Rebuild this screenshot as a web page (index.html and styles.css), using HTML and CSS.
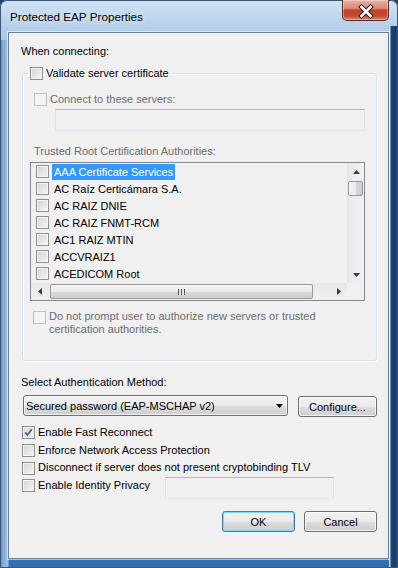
FILE: index.html
```html
<!DOCTYPE html>
<html lang="en">
<head>
  <meta charset="UTF-8" />
  <title>Protected EAP Properties</title>
  <link rel="stylesheet" href="styles.css">
</head>
<body>
  <div class="window">
    <div class="titlebar">
      <span class="title">Protected EAP Properties</span>
      <div class="close-btn">
        <svg width="47" height="21" viewBox="0 0 47 21">
          <path d="M19.5 8 L28.5 17 M28.5 8 L19.5 17" stroke="#3b1812" stroke-width="4.6" stroke-linecap="square" fill="none"/>
          <path d="M19.5 8 L28.5 17 M28.5 8 L19.5 17" stroke="#fff" stroke-width="2.6" stroke-linecap="square" fill="none"/>
        </svg>
      </div>
    </div>

    <div class="client">
      <div class="label">When connecting:</div>

      <fieldset class="group">
        <legend><div class="check"><span class="cb"></span>Validate server certificate</div></legend>

        <div class="check disabled"><span class="cb"></span>Connect to these servers:</div>
        <div class="textbox servers"></div>

        <div class="label disabled trusted">Trusted Root Certification Authorities:</div>
        <div class="listbox">
          <div class="list-items">
            <div class="item"><span class="cb"></span><span class="item-text selected">AAA Certificate Services</span></div>
            <div class="item"><span class="cb"></span><span class="item-text">AC Raíz Certicámara S.A.</span></div>
            <div class="item"><span class="cb"></span><span class="item-text">AC RAIZ DNIE</span></div>
            <div class="item"><span class="cb"></span><span class="item-text">AC RAIZ FNMT-RCM</span></div>
            <div class="item"><span class="cb"></span><span class="item-text">AC1 RAIZ MTIN</span></div>
            <div class="item"><span class="cb"></span><span class="item-text">ACCVRAIZ1</span></div>
            <div class="item"><span class="cb"></span><span class="item-text">ACEDICOM Root</span></div>
          </div>
          <div class="vscroll">
            <div class="sb-btn"><svg width="7" height="4" viewBox="0 0 7 4"><path d="M0 4 L3.5 0 L7 4 Z" fill="#3c3c3c"/></svg></div>
            <div class="vthumb"></div>
            <div class="sb-track"></div>
            <div class="sb-btn"><svg width="7" height="4" viewBox="0 0 7 4"><path d="M0 0 L3.5 4 L7 0 Z" fill="#3c3c3c"/></svg></div>
          </div>
          <div class="hscroll">
            <div class="sb-btn"><svg width="4" height="7" viewBox="0 0 4 7"><path d="M4 0 L0 3.5 L4 7 Z" fill="#3c3c3c"/></svg></div>
            <div class="hthumb"><span class="grip"></span></div>
            <div class="sb-track"></div>
            <div class="sb-btn"><svg width="4" height="7" viewBox="0 0 4 7"><path d="M0 0 L4 3.5 L0 7 Z" fill="#3c3c3c"/></svg></div>
          </div>
          <div class="corner"></div>
        </div>

        <div class="check disabled multiline"><span class="cb"></span><span>Do not prompt user to authorize new servers or trusted<br>certification authorities.</span></div>
      </fieldset>

      <div class="label method-label">Select Authentication Method:</div>
      <div class="method-row">
        <div class="combo">
          <span>Secured password (EAP-MSCHAP v2)</span>
          <svg width="7" height="4" viewBox="0 0 7 4"><path d="M0 0 L3.5 4 L7 0 Z" fill="#000"/></svg>
        </div>
        <div class="button configure">Configure...</div>
      </div>

      <div class="options">
        <div class="check"><span class="cb checked"><svg width="11" height="11" viewBox="0 0 11 11"><path d="M2.2 5.4 L4.4 8 L8.8 2.2" stroke="#4a5f8c" stroke-width="1.8" fill="none"/></svg></span>Enable Fast Reconnect</div>
        <div class="check"><span class="cb"></span>Enforce Network Access Protection</div>
        <div class="check"><span class="cb"></span>Disconnect if server does not present cryptobinding TLV</div>
        <div class="privacy-row">
          <div class="check privacy"><span class="cb"></span>Enable Identity Privacy</div>
          <div class="textbox identity"></div>
        </div>
      </div>

      <div class="dialog-buttons">
        <div class="button default">OK</div>
        <div class="button">Cancel</div>
      </div>
    </div>
  </div>
</body>
</html>
```

FILE: styles.css
```css
* { box-sizing: border-box; }
body {
  margin: 0;
  font-family: 'Liberation Sans', Arial, sans-serif;
  font-size: 11px;
  color: #000;
  background: #1d3f6e;
}
/* Aero glass frame */
.window {
  width: 398px;
  height: 568px;
  display: flex;
  flex-direction: column;
  padding: 0 9px 9px 8px;
  border-radius: 7px 7px 0 0;
  box-shadow: inset 0 0 0 1px #3b5775;
  background:
    linear-gradient(90deg, transparent 389px, #c7daee 389px, #c7daee 390px, #1f467a 391px, #163a68 396px, #3d6ea4 398px) 0 26px / 100% 542px no-repeat,
    linear-gradient(90deg, #33689f 0, #7aa6d6 2px, #9cc0e4 8px, transparent 9px) 0 40px / 100% 528px no-repeat,
    linear-gradient(180deg, #d2e3f4 0, #bcd4ec 20px, #a9c7e7 40px, #7ea8d6 200px, #4f86c3 520px, #2f6cb0 568px);
}
.titlebar {
  height: 32px;
  display: flex;
  align-items: flex-start;
}
.title {
  margin: 10px 0 0 2px;
  font-size: 11.7px;
  line-height: 14px;
  text-shadow: 0 0 6px rgba(255,255,255,0.9);
}
.close-btn {
  margin-left: auto;
  width: 47px;
  height: 21px;
  border: 1px solid #5b2a22;
  border-top: none;
  border-radius: 0 0 5px 5px;
  background: linear-gradient(180deg, #eab0a2 0%, #dc8875 42%, #c4412b 50%, #c14a33 78%, #d9886c 100%);
  box-shadow: inset 0 0 0 1px rgba(255,255,255,0.35);
}
.close-btn svg { display: block; margin: -1px 0 0 -1px; }

.client {
  flex: 1;
  display: flex;
  flex-direction: column;
  padding: 11px 11px 0 12px;
  background: #f0f0f0;
  border: 1px solid #6d7f93;
  box-shadow: 0 0 0 1px rgba(255,255,255,0.55);
}
.label { line-height: 15px; }
.disabled { color: #6d6d6d; }

/* checkboxes */
.check {
  display: flex;
  align-items: center;
  gap: 3px;
  line-height: 15px;
  white-space: nowrap;
}
.cb {
  flex: none;
  width: 13px;
  height: 13px;
  border: 1px solid #8e8f8f;
  background: linear-gradient(135deg, #d3d3d3, #f6f6f6);
  box-shadow: inset 0 0 0 1px #f4f4f4;
}
.cb.checked svg { display: block; }
.disabled .cb {
  border-color: #c3c3c3;
  background: #f4f4f4;
  box-shadow: none;
}

/* group box */
.group {
  margin: 7px 0 0 1px;
  padding: 11px 11px 24px 11px;
  border: 1px solid #d5dfe5;
  border-radius: 3px;
  box-shadow: 1px 1px 0 #fff, inset 1px 1px 0 #fff;
  display: flex;
  flex-direction: column;
}
.group legend {
  padding: 0 3px 0 2px;
  margin-left: -6px;
}
.textbox {
  height: 22px;
  border: 1px solid;
  border-color: #b5b9be #dde2e7 #e3e9ef #dde2e7;
  background: #f0f0f0;
}
.servers { margin: 2px 0 0 21px; }
.trusted { margin-top: 13px; }

/* certificate list */
.listbox {
  margin: 3px 0 0 -4px;
  height: 139px;
  border: 1px solid #828790;
  display: grid;
  grid-template-columns: 1fr 17px;
  grid-template-rows: 1fr 17px;
}
.list-items { overflow: hidden; }
.item {
  height: 17px;
  display: flex;
  align-items: center;
  padding-left: 5px;
  white-space: nowrap;
}
.item-text {
  margin-left: 3px;
  padding: 0 2px;
  line-height: 16px;
}
.item-text.selected { background: #3399ff; color: #fff; }

.vscroll, .hscroll {
  display: flex;
  background: linear-gradient(90deg, #e9e9e9, #f2f2f2);
}
.vscroll { flex-direction: column; border-left: 1px solid #e3e3e3; }
.hscroll { background: linear-gradient(180deg, #e7e7e7, #f1f1f1); }
.sb-btn {
  flex: none;
  width: 17px;
  height: 17px;
  display: flex;
  align-items: center;
  justify-content: center;
}
.vscroll .sb-btn { width: 16px; }
.sb-track { flex: 1; }
.vthumb {
  margin: 1px 1px 0 0;
  height: 15px;
  border: 1px solid #9b9b9b;
  border-radius: 2px;
  background: linear-gradient(90deg, #f4f4f4, #e9e9e9 50%, #d9d9d9 51%, #cdcdcd);
}
.hthumb {
  margin: 1px 0 1px 2px;
  width: 263px;
  border: 1px solid #9b9b9b;
  border-radius: 2px;
  background: linear-gradient(180deg, #f4f4f4, #e9e9e9 50%, #d9d9d9 51%, #cdcdcd);
  display: flex;
  align-items: center;
  justify-content: center;
}
.grip {
  width: 7px;
  height: 6px;
  background: repeating-linear-gradient(90deg, #555 0 1px, #e5e5e5 1px 3px);
}
.corner { background: #f0f0f0; }

.multiline {
  margin: 9px 0 0 -1px;
  align-items: flex-start;
  line-height: 13px;
}
.multiline .cb { margin-top: 1px; }

/* authentication method */
.method-label { margin-top: 14px; }
.method-row {
  margin-top: 5px;
  display: flex;
  align-items: flex-start;
}
.combo {
  margin-left: 2px;
  width: 265px;
  height: 21px;
  padding: 0 4px 0 2px;
  display: flex;
  align-items: center;
  justify-content: space-between;
  border: 1px solid #707070;
  border-radius: 3px;
  background: linear-gradient(180deg, #f2f2f2 0, #ebebeb 50%, #dddddd 51%, #cfcfcf 100%);
  box-shadow: inset 0 0 0 1px rgba(255,255,255,0.7);
}
.button {
  height: 21px;
  display: flex;
  align-items: center;
  justify-content: center;
  border: 1px solid #707070;
  border-radius: 3px;
  background: linear-gradient(180deg, #f2f2f2 0, #ebebeb 50%, #dddddd 51%, #cfcfcf 100%);
  box-shadow: inset 0 0 0 1px rgba(255,255,255,0.7);
}
.configure { margin: 1px 0 0 auto; width: 79px; }

.options {
  margin-top: 7px;
  display: flex;
  flex-direction: column;
}
.options .check { line-height: 17.7px; margin-left: 1px; }
.privacy-row { display: flex; align-items: flex-start; }
.privacy { width: 143px; }
.identity { width: 169px; }

.dialog-buttons {
  margin-top: 12px;
  display: flex;
  justify-content: flex-end;
  gap: 9px;
}
.dialog-buttons .button { width: 73px; }
.button.default {
  border-color: #3c7fb1;
  box-shadow: inset 0 0 0 1px #7fd6f7;
}
```
